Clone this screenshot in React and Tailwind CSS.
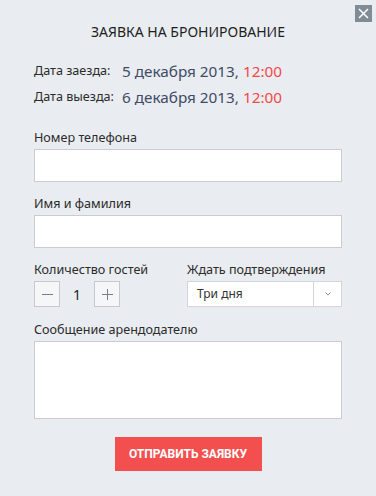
import React, { useState } from 'react';

const font = { fontFamily: '"Noto Sans", "Open Sans", Arial, sans-serif' };

const Label = ({ children }) => (
  <div className="h-[18px] text-[12.6px] leading-[18px] text-[#2b2b2b]">{children}</div>
);

const DateRow = ({ label, date }) => (
  <div className="flex h-[26px] items-center">
    <span className="w-[88px] text-[12.6px] text-[#2b2b2b]">{label}</span>
    <span className="text-[15.3px] text-[#404b66]">
      {date}, <span className="text-[#f24848]">12:00</span>
    </span>
  </div>
);

export default function App() {
  const [guests, setGuests] = useState(1);

  return (
    <div className="relative h-[496px] w-[376px] bg-[#e9ecf0] px-[34px]" style={font}>
      <button className="absolute right-[4px] top-[5px] flex h-[17px] w-[17px] items-center justify-center bg-[#7f8b95]">
        <svg width="11" height="11" viewBox="0 0 11 11" fill="none" stroke="#fff" strokeWidth="1.5">
          <path d="M1 1l9 9M10 1l-9 9" />
        </svg>
      </button>

      <div className="pt-[22px] text-center text-[14px] leading-[20px] text-[#1e1e1e]">
        ЗАЯВКА НА БРОНИРОВАНИЕ
      </div>

      <div className="mt-[16px]">
        <DateRow label="Дата заезда:" date="5 декабря 2013" />
        <DateRow label="Дата выезда:" date="6 декабря 2013" />
      </div>

      <div className="mt-[19px]">
        <Label>Номер телефона</Label>
        <input className="mt-[2px] h-[33px] w-[308px] border border-[#c9cdd1] bg-white outline-none" />
      </div>

      <div className="mt-[13px]">
        <Label>Имя и фамилия</Label>
        <input className="mt-[2px] h-[33px] w-[308px] border border-[#c9cdd1] bg-white outline-none" />
      </div>

      <div className="mt-[13px] flex">
        <div className="w-[153px]">
          <Label>Количество гостей</Label>
          <div className="mt-[2px] flex h-[26px] items-center">
            <button
              onClick={() => setGuests(Math.max(1, guests - 1))}
              className="flex h-[26px] w-[26px] items-center justify-center border border-[#c6cacf] bg-[#f5f6f8]"
            >
              <span className="block h-[1px] w-[11px] bg-[#7a7f86]" />
            </button>
            <span className="w-[34px] text-center text-[14px] text-[#222]">{guests}</span>
            <button
              onClick={() => setGuests(guests + 1)}
              className="relative flex h-[26px] w-[26px] items-center justify-center border border-[#c6cacf] bg-[#f5f6f8]"
            >
              <span className="block h-[1px] w-[11px] bg-[#7a7f86]" />
              <span className="absolute block h-[11px] w-[1px] bg-[#7a7f86]" />
            </button>
          </div>
        </div>
        <div className="w-[155px]">
          <Label>Ждать подтверждения</Label>
          <div className="mt-[2px] flex h-[26px] border border-[#d2d5d9] bg-white">
            <div className="flex flex-1 items-center pl-[9px] text-[12px] text-[#333]">Три дня</div>
            <div className="flex w-[28px] items-center justify-center border-l border-[#d2d5d9]">
              <svg width="6" height="4" viewBox="0 0 6 4" fill="none" stroke="#8a8f96" strokeWidth="1">
                <path d="M0.5 0.5l2.5 2.5 2.5-2.5" />
              </svg>
            </div>
          </div>
        </div>
      </div>

      <div className="mt-[14px]">
        <Label>Сообщение арендодателю</Label>
        <textarea className="mt-[2px] block h-[78px] w-[308px] resize-none border border-[#c9cdd1] bg-white outline-none" />
      </div>

      <div className="mt-[18px] flex justify-center">
        <button
          className="h-[34px] w-[147px] bg-[#f44f4f] text-[12px] font-bold text-white"
          style={{ fontFamily: 'Roboto, "Liberation Sans", sans-serif' }}
        >
          ОТПРАВИТЬ ЗАЯВКУ
        </button>
      </div>
    </div>
  );
}
